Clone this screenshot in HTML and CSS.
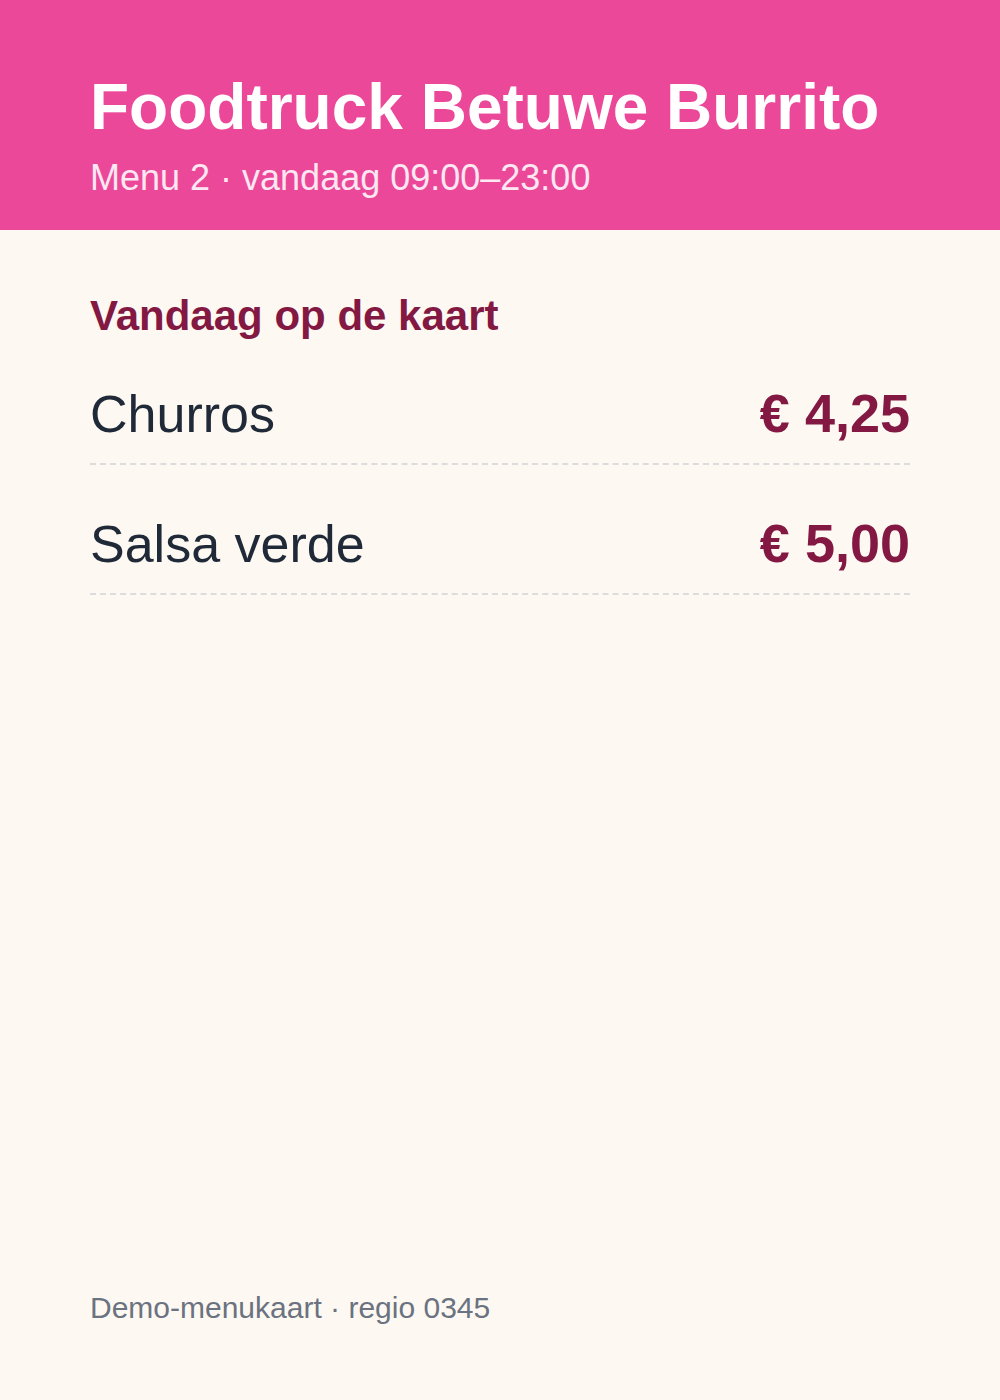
FILE: index.html
```html
<!DOCTYPE html>
<html lang="nl">
<head>
    <meta charset="UTF-8">
    <meta name="viewport" content="width=device-width, initial-scale=1.0">
    <title>Foodtruck Betuwe Burrito</title>
    <link rel="stylesheet" href="styles.css">
</head>
<body>
    <div class="menu-card">
        <header class="menu-header">
            <h1>Foodtruck Betuwe Burrito</h1>
            <p class="subtitle">Menu 2 · vandaag 09:00–23:00</p>
        </header>

        <main class="menu-body">
            <h2>Vandaag op de kaart</h2>
            <ul class="menu-list">
                <li class="menu-item">
                    <span class="item-name">Churros</span>
                    <span class="item-price">€ 4,25</span>
                </li>
                <li class="menu-item">
                    <span class="item-name">Salsa verde</span>
                    <span class="item-price">€ 5,00</span>
                </li>
            </ul>
        </main>

        <footer class="menu-footer">Demo-menukaart · regio 0345</footer>
    </div>
</body>
</html>
```

FILE: styles.css
```css
:root {
    --pink: #ec4899;
    --wine: #831843;
    --cream: #fdf9f2;
    --ink: #1f2937;
    --muted: #6b7280;
    --rule: #dcdcdc;
}

* {
    margin: 0;
    padding: 0;
    box-sizing: border-box;
}

body {
    background-color: var(--cream);
    font-family: 'Liberation Sans', Arial, sans-serif;
    color: var(--ink);
}

.menu-card {
    display: flex;
    flex-direction: column;
    min-height: 1400px;
}

.menu-header {
    background-color: var(--pink);
    color: #ffffff;
    padding: 69px 90px 0;
    height: 230px;
}

h1 {
    font-size: 64px;
    font-weight: bold;
    line-height: 1.2;
}

.subtitle {
    font-size: 36px;
    line-height: 1.2;
    color: #fde7f2;
    margin-top: 10px;
}

.menu-body {
    flex: 1;
    padding: 61px 90px 0;
}

h2 {
    color: var(--wine);
    font-size: 42px;
    font-weight: bold;
    line-height: 1.2;
    margin-bottom: 14px;
}

.menu-list {
    list-style: none;
}

.menu-item {
    display: flex;
    justify-content: space-between;
    align-items: baseline;
    padding: 27px 0 18px;
    border-bottom: 2px dashed var(--rule);
    margin-bottom: 20px;
}

.item-name {
    font-size: 52px;
    line-height: 62px;
}

.item-price {
    font-size: 54px;
    font-weight: bold;
    color: var(--wine);
    line-height: 62px;
}

.menu-footer {
    padding: 0 90px 74px;
    font-size: 30px;
    line-height: 1.2;
    color: var(--muted);
}
```
